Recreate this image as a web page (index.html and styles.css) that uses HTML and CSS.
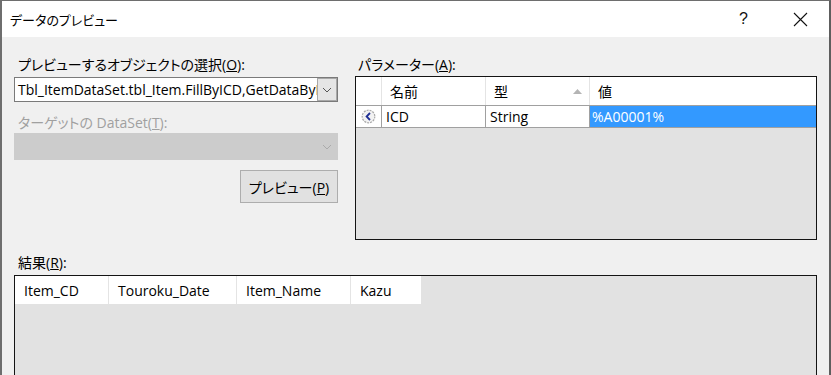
FILE: index.html
```html
<!DOCTYPE html>
<html lang="ja">
<head>
<meta charset="utf-8">
<title>データのプレビュー</title>
<link rel="stylesheet" href="styles.css">
</head>
<body>
<div class="dialog">
  <div class="titlebar">
    <span class="title">データのプレビュー</span>
    <span class="tb-btn help">?</span>
    <span class="tb-btn close">
      <svg width="15" height="15" viewBox="0 0 15 15"><path d="M1 1 L14 14 M14 1 L1 14" stroke="#111" stroke-width="1.1" fill="none"/></svg>
    </span>
  </div>
  <div class="content">
    <div class="top">
      <div class="left">
        <div class="label">プレビューするオブジェクトの選択(<u>O</u>):</div>
        <div class="combo">
          <span class="combo-text">Tbl_ItemDataSet.tbl_Item.FillByICD,GetDataByICD</span>
          <span class="combo-btn">
            <svg width="10" height="6" viewBox="0 0 10 6"><path d="M1 1 L5 5 L9 1" stroke="#555" stroke-width="1" fill="none"/></svg>
          </span>
        </div>
        <div class="label label-disabled">ターゲットの DataSet(<u>T</u>):</div>
        <div class="combo combo-disabled">
          <span class="combo-text"></span>
          <span class="combo-btn">
            <svg width="10" height="6" viewBox="0 0 10 6"><path d="M1 1 L5 5 L9 1" stroke="#aaa" stroke-width="1" fill="none"/></svg>
          </span>
        </div>
        <button class="btn">プレビュー(<u>P</u>)</button>
      </div>
      <div class="right">
        <div class="label label-param">パラメーター(<u>A</u>):</div>
        <div class="grid param">
          <div class="prow phead">
            <div class="pc rowhead"></div>
            <div class="pc col-name">名前</div>
            <div class="pc col-type">型<svg class="sort" width="9" height="5" viewBox="0 0 9 5"><path d="M0 5 L4.5 0 L9 5 Z" fill="#b4b4b4"/></svg></div>
            <div class="pc col-val">値</div>
          </div>
          <div class="prow pdata">
            <div class="pc rowhead">
              <svg width="15" height="15" viewBox="0 0 15 15"><circle cx="7.5" cy="7.5" r="6.3" fill="#f2f2f2" stroke="#a8a8a8" stroke-width="1.2" stroke-dasharray="2 1"/><path d="M9 4 L5.6 7.5 L9 11" stroke="#1f2f95" stroke-width="1.8" fill="none"/></svg>
            </div>
            <div class="pc col-name">ICD</div>
            <div class="pc col-type">String</div>
            <div class="pc col-val selected">%A00001%</div>
          </div>
        </div>
      </div>
    </div>
    <div class="label label-results">結果(<u>R</u>):</div>
    <div class="grid results">
      <div class="rhead">
        <div class="rc rc1">Item_CD</div>
        <div class="rc rc2">Touroku_Date</div>
        <div class="rc rc3">Item_Name</div>
        <div class="rc rc4">Kazu</div>
      </div>
    </div>
  </div>
</div>
</body>
</html>
```
FILE: styles.css
```css
html, body {
  margin: 0;
  padding: 0;
  background: #f0f0f0;
}
body {
  font-family: "Open Sans", "Noto Sans CJK JP", sans-serif;
  font-size: 14px;
  font-feature-settings: "palt";
  color: #000;
}
.dialog {
  width: 831px;
  height: 375px;
  box-sizing: border-box;
  border-top: 1px solid #6e6e6e;
  border-left: 2px solid #6e6e6e;
  border-right: 2px solid #5e5e5e;
  background: #f0f0f0;
  overflow: hidden;
}
.titlebar {
  height: 36px;
  background: #fff;
  display: flex;
  align-items: center;
  padding-left: 8px;
}
.title {
  font-size: 13px;
  flex: 1;
}
.tb-btn {
  width: 57px;
  height: 36px;
  display: flex;
  align-items: center;
  justify-content: center;
}
.help {
  font-size: 16px;
  color: #111;
  font-family: "Liberation Sans", sans-serif;
}
.content {
  padding: 18px 12px 0 12px;
}
.top {
  display: grid;
  grid-template-columns: 324px 462px;
  column-gap: 17px;
  height: 185px;
}
.left {
  display: flex;
  flex-direction: column;
}
.label {
  height: 20px;
  line-height: 20px;
  padding-left: 4px;
  white-space: nowrap;
}
.label-disabled {
  color: #a0a0a0;
  margin-top: 11px;
}
.label-param {
  padding-left: 3px;
}
.combo {
  height: 25px;
  box-sizing: border-box;
  border: 1px solid #7a7a7a;
  background: #fff;
  display: flex;
  margin-top: 2px;
}
.combo-text {
  flex: 1;
  overflow: hidden;
  white-space: nowrap;
  padding-left: 3px;
  line-height: 23px;
}
.combo-btn {
  width: 20px;
  box-sizing: border-box;
  border: 1px solid #a8a8a8;
  background: #e5e5e5;
  display: flex;
  align-items: center;
  justify-content: center;
}
.combo-disabled {
  height: 27px;
  margin-top: 0;
  background: #cccccc;
  border-color: #cccccc;
}
.combo-disabled .combo-btn {
  border: none;
  background: transparent;
}
.btn {
  align-self: flex-end;
  width: 98px;
  height: 33px;
  margin-top: 10px;
  background: #e1e1e1;
  border: 1px solid #adadad;
  font: inherit;
  color: #000;
  padding: 0;
}
.right {
  display: flex;
  flex-direction: column;
}
.grid {
  border: 1px solid #141414;
  background: #e2e2e2;
  box-sizing: border-box;
}
.param {
  height: 164px;
  margin-top: 1px;
}
.prow {
  display: flex;
  background: #fff;
}
.phead {
  height: 28px;
}
.pdata {
  height: 23px;
  box-sizing: border-box;
  border-top: 1px solid #a0a0a0;
  border-bottom: 1px solid #a0a0a0;
}
.pc {
  box-sizing: border-box;
  display: flex;
  align-items: center;
  white-space: nowrap;
}
.phead .pc {
  border-right: 1px solid #e4e4e4;
  padding-left: 8px;
}
.phead .col-val {
  border-right: none;
}
.pdata .pc {
  border-right: 1px solid #a0a0a0;
  padding-left: 4px;
}
.pdata .col-val {
  border-right: none;
}
.rowhead {
  width: 26px;
}
.pdata .rowhead {
  padding-left: 5px;
}
.col-name {
  width: 104px;
}
.col-type {
  width: 104px;
}
.phead .col-type {
  justify-content: space-between;
  padding-right: 7px;
}
.sort {
  margin-top: 1px;
}
.col-val {
  flex: 1;
}
.pdata .selected {
  background: #3399ff;
  color: #fff;
  padding-left: 2px;
}
.label-results {
  margin-top: 13px;
}
.results {
  height: 120px;
  margin-top: 2px;
}
.rhead {
  display: flex;
  height: 28px;
}
.rc {
  background: #fff;
  box-sizing: border-box;
  border-right: 1px solid #e4e4e4;
  padding-left: 9px;
  display: flex;
  align-items: center;
  white-space: nowrap;
}
.rc1 { width: 94px; }
.rc2 { width: 128px; }
.rc3 { width: 114px; }
.rc4 { width: 70px; border-right: none; }
```
